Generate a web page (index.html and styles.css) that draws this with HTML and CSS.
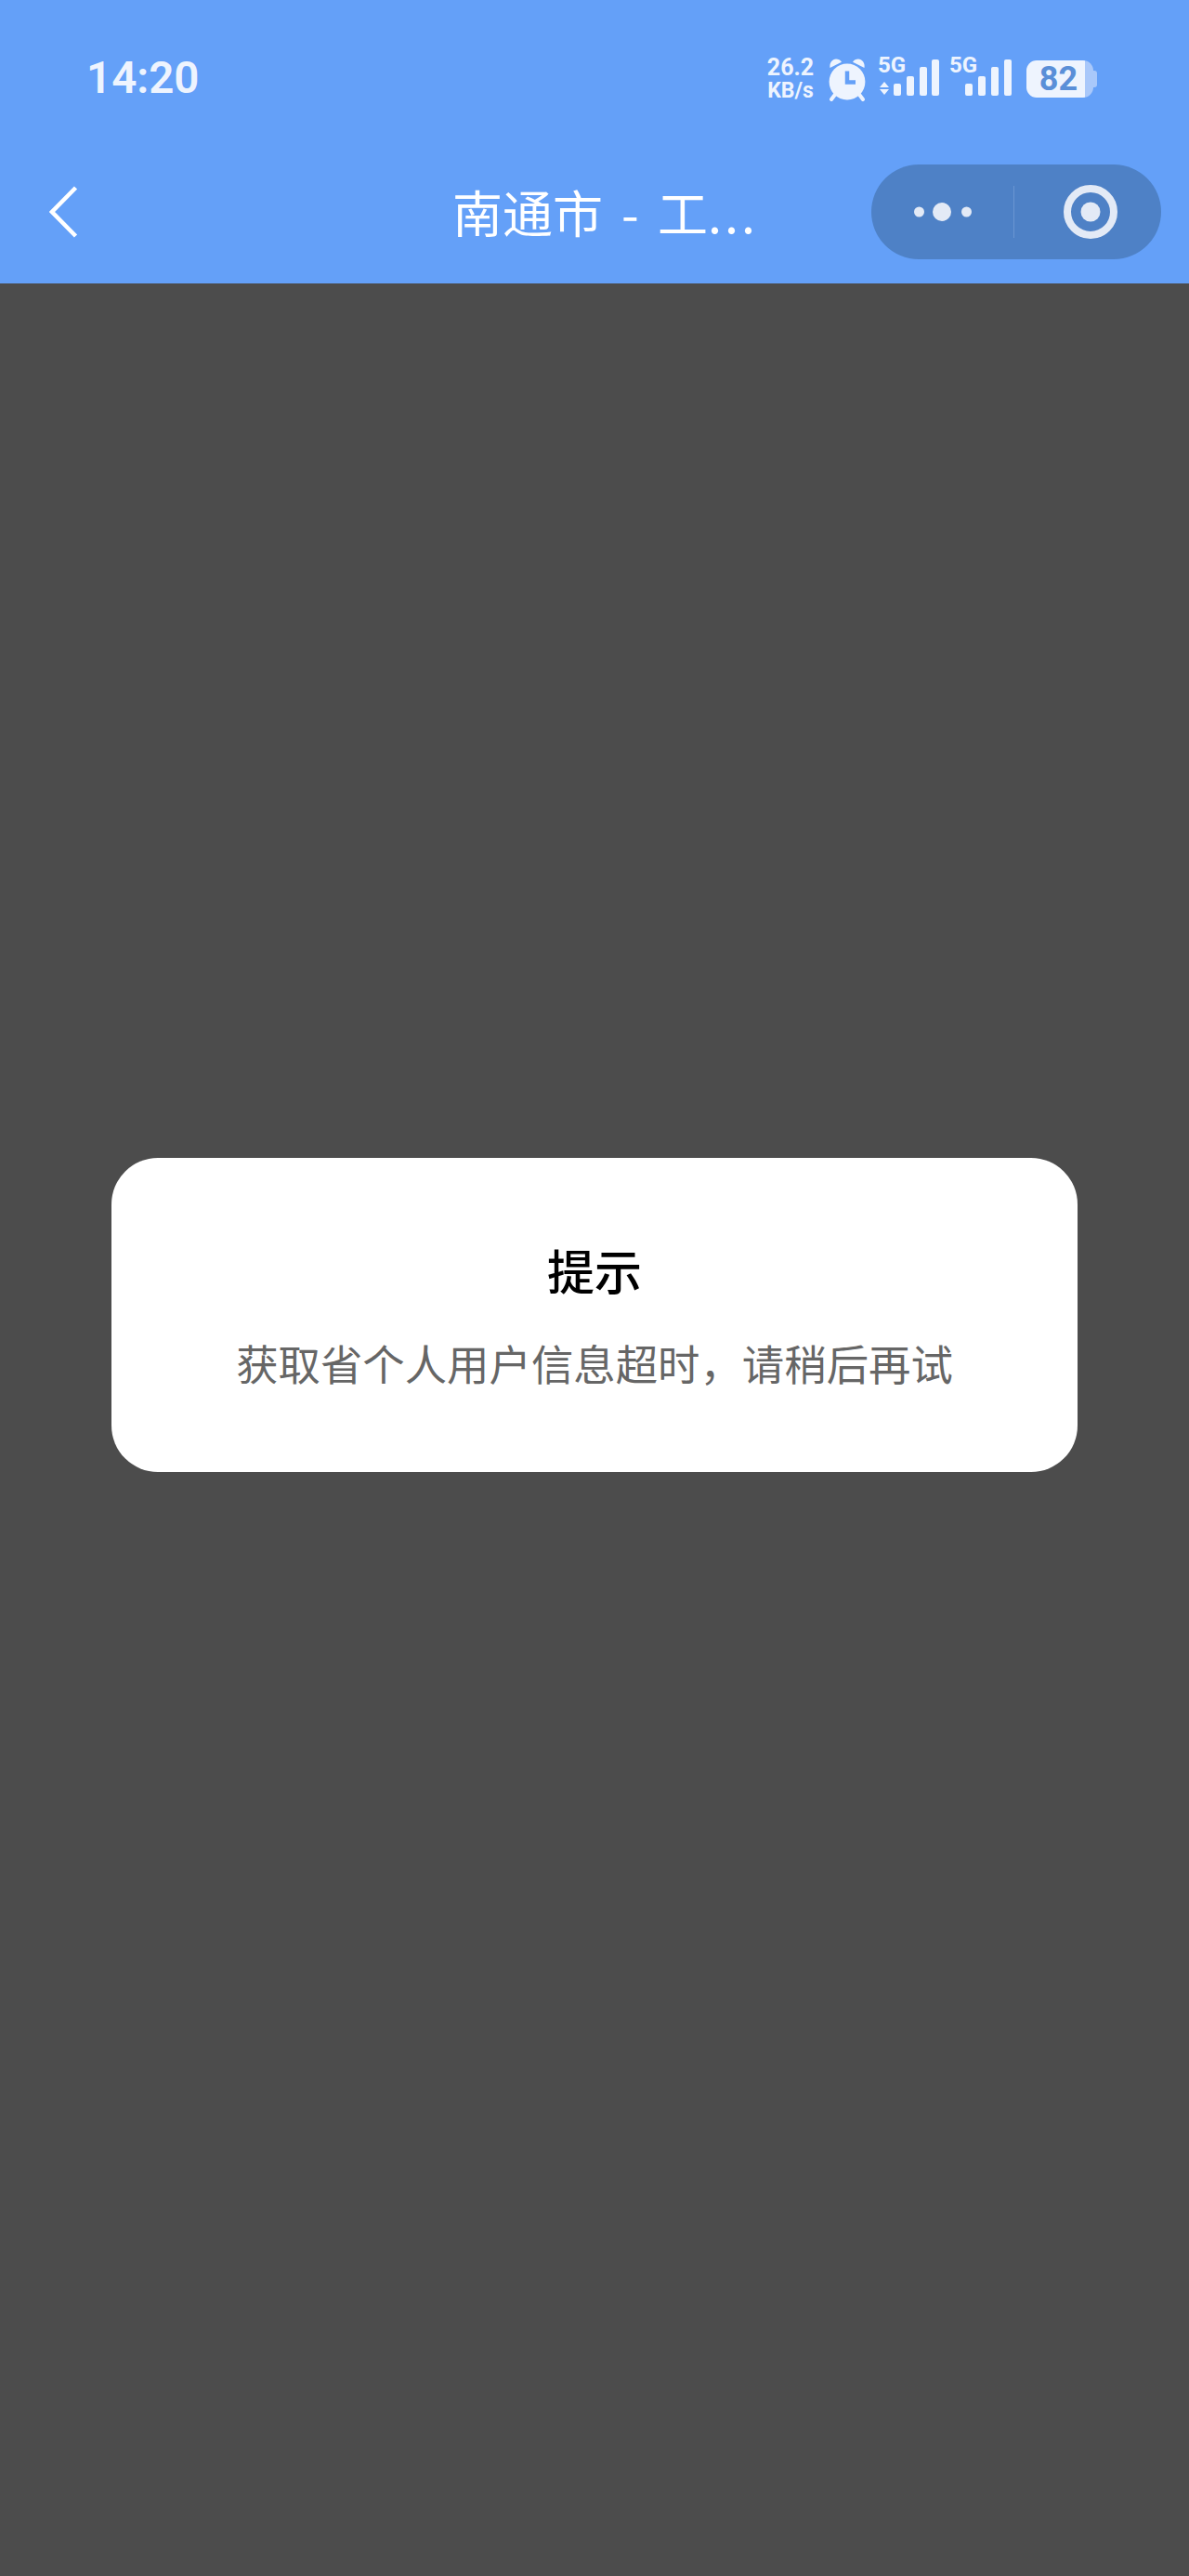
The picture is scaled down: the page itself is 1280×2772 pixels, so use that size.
FILE: index.html
```html
<!DOCTYPE html>
<html lang="zh-CN">
<head>
<meta charset="utf-8">
<title>南通市 - 工...</title>
<link rel="stylesheet" href="styles.css">
</head>
<body>
<div class="page">
  <header class="header">
    <div class="statusbar">
      <span class="time">14:20</span>
      <div class="status-icons">
        <div class="speed"><span class="speed-value">26.2</span><span class="speed-unit">KB/s</span></div>
        <svg class="alarm" width="46" height="48" viewBox="0 0 46 48" aria-hidden="true">
          <path class="solid" d="M4.5 12C3.6 7 7 2.6 11 2.6c2.6 0 4.6 1.1 6 3.2Z"/>
          <path class="solid" d="M41.5 12C42.4 7 39 2.6 35 2.6c-2.6 0-4.6 1.1-6 3.2Z"/>
          <circle class="solid" cx="23" cy="27" r="19.4"/>
          <path class="line" d="M10.500 40 6 46M35.500 40 40 46"/>
          <path class="hand" d="M23 15.500V27.500H32"/>
        </svg>
        <svg class="signal" width="67" height="60" viewBox="0 -8 67 60" aria-hidden="true">
          <text class="net" x="0" y="15">5G</text>
          <path class="solid" d="M7 25l5 6H2ZM7 39l5-6H2Z"/>
          <rect class="solid" x="17" y="27" width="8" height="13" rx="2"/>
          <rect class="solid" x="31" y="19" width="8" height="21" rx="2"/>
          <rect class="solid" x="45" y="9" width="8" height="31" rx="2"/>
          <rect class="solid" x="58" y="1" width="8" height="39" rx="2"/>
        </svg>
        <svg class="signal" width="67" height="60" viewBox="0 -8 67 60" aria-hidden="true">
          <text class="net" x="0" y="15">5G</text>
          <rect class="solid" x="17" y="27" width="8" height="13" rx="2"/>
          <rect class="solid" x="31" y="19" width="8" height="21" rx="2"/>
          <rect class="solid" x="45" y="9" width="8" height="31" rx="2"/>
          <rect class="solid" x="59" y="1" width="8" height="39" rx="2"/>
        </svg>
        <div class="battery"><div class="battery-body">82</div><div class="battery-nub"></div></div>
      </div>
    </div>
    <nav class="navbar">
      <svg class="back" width="32" height="56" viewBox="0 0 32 56" aria-hidden="true">
        <path d="M28.500 2 3 28 28.500 54"/>
      </svg>
      <h1 class="nav-title">南通市 - 工<span class="nav-ellipsis">...</span></h1>
      <div class="capsule">
        <div class="capsule-part">
          <svg width="62" height="24" viewBox="0 0 62 24" aria-hidden="true">
            <circle class="cap-fill" cx="5.500" cy="12" r="5.500"/>
            <circle class="cap-fill" cx="30" cy="12" r="10"/>
            <circle class="cap-fill" cx="56.500" cy="12" r="5.500"/>
          </svg>
        </div>
        <div class="capsule-divider"></div>
        <div class="capsule-part capsule-part-right">
          <svg width="58" height="58" viewBox="0 0 58 58" aria-hidden="true">
            <circle class="cap-ring" cx="29" cy="29" r="25"/>
            <circle class="cap-fill" cx="29" cy="29" r="10.500"/>
          </svg>
        </div>
      </div>
    </nav>
  </header>
  <main class="content">
    <section class="dialog">
      <h2 class="dialog-title">提示</h2>
      <p class="dialog-message">获取省个人用户信息超时，请稍后再试</p>
    </section>
  </main>
</div>
</body>
</html>
```

FILE: styles.css
```css
* { box-sizing: border-box; }
html, body { margin: 0; padding: 0; }
body { font-family: "Noto Sans CJK SC", "Noto Sans", sans-serif; background: #4c4c4c; }
.page { width: 1280px; height: 2772px; display: flex; flex-direction: column; overflow: hidden; }

.header { height: 305px; background: #64a0f8; padding-top: 40px; }
.statusbar { height: 90px; display: flex; align-items: center; justify-content: space-between; padding: 0 99px 0 93px; }
.time { font-family: Roboto, sans-serif; font-weight: 600; font-size: 47.500px; line-height: 1; color: #eef4fe; }
.status-icons { display: flex; align-items: center; }
.speed { width: 54px; display: flex; flex-direction: column; align-items: center; font-family: Roboto, sans-serif; font-weight: 700; color: #eef4fe; }
.speed-value { font-size: 25px; line-height: 26px; }
.speed-unit { font-size: 23px; line-height: 24px; }
.alarm { margin-left: 11px; }
.signal { margin-left: 10px; }
.solid { fill: #eef4fe; }
.line { stroke: #eef4fe; stroke-width: 4; stroke-linecap: round; fill: none; }
.hand { stroke: #64a0f8; stroke-width: 4.500; fill: none; }
.net { font-family: Roboto, sans-serif; font-weight: 700; font-size: 24px; fill: #eef4fe; }
.battery { margin-left: 16px; display: flex; align-items: center; }
.battery-body { width: 72px; height: 40px; border-radius: 11px; background: linear-gradient(to right, #eef4fe 87%, #a9c8fa 87%); display: flex; align-items: center; justify-content: center; padding-right: 3px; font-family: Roboto, sans-serif; font-weight: 700; font-size: 36px; line-height: 1; color: #5a8fd8; }
.battery-nub { width: 4px; height: 18px; border-radius: 0 3px 3px 0; background: #a9c8fa; }

.navbar { height: 102px; margin-top: 47px; display: grid; grid-template-columns: 1fr auto 1fr; align-items: center; padding: 0 30px 0 53px; }
.back { fill: none; stroke: #fff; stroke-width: 4.500; }
.nav-title { margin: 0; font-weight: 400; font-size: 54px; line-height: 70px; color: #fff; white-space: nowrap; word-spacing: 8px; }
.nav-ellipsis { letter-spacing: 3px; }
.capsule { justify-self: end; width: 312px; height: 102px; border-radius: 51px; background: #4e81c6; display: flex; align-items: center; }
.capsule-part { flex: 1; display: flex; align-items: center; justify-content: center; }
.capsule-part-right { padding-left: 5px; }
.capsule-divider { width: 1px; height: 56px; background: #6a96d2; }
.cap-fill { fill: #e3eaf6; }
.cap-ring { fill: none; stroke: #e3eaf6; stroke-width: 8; }

.content { flex: 1; padding: 941px 120px 0; background: #4c4c4c; }
.dialog { height: 338px; border-radius: 50px; background: #fff; padding-top: 96px; text-align: center; }
.dialog-title { margin: 0; font-weight: 500; font-size: 51px; line-height: 48px; color: #000; }
.dialog-message { margin: 46px 0 0; font-weight: 400; font-size: 45.400px; line-height: 60px; color: #666; }
```
